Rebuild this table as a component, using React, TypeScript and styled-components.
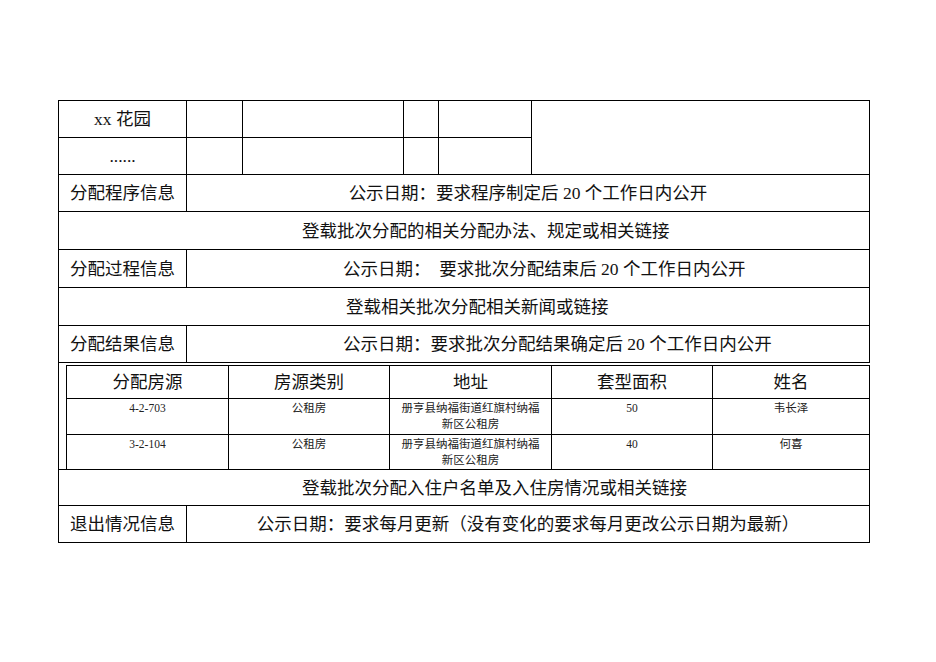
import styled, { createGlobalStyle } from 'styled-components';

const GlobalStyle = createGlobalStyle`
  html, body {
    margin: 0;
    padding: 0;
    background: #fff;
  }
  body {
    font-family: "Liberation Serif", "Noto Sans CJK SC", serif;
    color: #111;
  }
`;

type House = {
  room: string;
  kind: string;
  address: string;
  area: string;
  name: string;
  h: number;
};

const houses: House[] = [
  { room: '4-2-703', kind: '公租房', address: '册亨县纳福街道红旗村纳福新区公租房', area: '50', name: '韦长泽', h: 36 },
  { room: '3-2-104', kind: '公租房', address: '册亨县纳福街道红旗村纳福新区公租房', area: '40', name: '何喜', h: 35 },
];

const heads = ['分配房源', '房源类别', '地址', '套型面积', '姓名'];

const App = () => {
  return (
    <Page>
      <GlobalStyle />
      <Sheet>
        <colgroup>
          <col style={{ width: 128 }} />
          <col style={{ width: 56 }} />
          <col style={{ width: 161 }} />
          <col style={{ width: 35 }} />
          <col style={{ width: 93 }} />
          <col style={{ width: 338 }} />
        </colgroup>
        <tbody>
          <Row $h={37}>
            <Cell>xx 花园</Cell>
            <Cell />
            <Cell />
            <Cell />
            <Cell />
            <Cell rowSpan={2} />
          </Row>
          <Row $h={37}>
            <Cell>......</Cell>
            <Cell />
            <Cell />
            <Cell />
            <Cell />
          </Row>
          <Row $h={37}>
            <Cell>分配程序信息</Cell>
            <Cell colSpan={5}>公示日期：要求程序制定后 20 个工作日内公开</Cell>
          </Row>
          <Row $h={38}>
            <Cell colSpan={6} $indent={243}>登载批次分配的相关分配办法、规定或相关链接</Cell>
          </Row>
          <Row $h={38}>
            <Cell>分配过程信息</Cell>
            <Cell colSpan={5} $indent={156}>公示日期：　要求批次分配结束后 20 个工作日内公开</Cell>
          </Row>
          <Row $h={38}>
            <Cell colSpan={6} $indent={287}>登载相关批次分配相关新闻或链接</Cell>
          </Row>
          <Row $h={37}>
            <Cell>分配结果信息</Cell>
            <Cell colSpan={5} $indent={156}>公示日期：要求批次分配结果确定后 20 个工作日内公开</Cell>
          </Row>
          <Row>
            <NestCell colSpan={6}>
              <InnerTable>
                <colgroup>
                  <col style={{ width: 162 }} />
                  <col style={{ width: 161 }} />
                  <col style={{ width: 162 }} />
                  <col style={{ width: 161 }} />
                  <col style={{ width: 157 }} />
                </colgroup>
                <tbody>
                  <InnerRow $h={33}>
                    {heads.map((h) => (
                      <HeadCell key={h}>{h}</HeadCell>
                    ))}
                  </InnerRow>
                  {houses.map((row) => (
                    <InnerRow key={row.room} $h={row.h}>
                      <DataCell>{row.room}</DataCell>
                      <DataCell>{row.kind}</DataCell>
                      <DataCell>{row.address}</DataCell>
                      <DataCell>{row.area}</DataCell>
                      <DataCell>{row.name}</DataCell>
                    </InnerRow>
                  ))}
                </tbody>
              </InnerTable>
            </NestCell>
          </Row>
          <Row $h={36}>
            <Cell colSpan={6} $indent={243}>登载批次分配入住户名单及入住房情况或相关链接</Cell>
          </Row>
          <Row $h={37}>
            <Cell>退出情况信息</Cell>
            <Cell colSpan={5}>公示日期：要求每月更新（没有变化的要求每月更改公示日期为最新）</Cell>
          </Row>
        </tbody>
      </Sheet>
    </Page>
  );
};

export default App;

const Page = styled.main`
  padding: 100px 0 40px 58px;
`;

const Sheet = styled.table`
  width: 811px;
  border-collapse: collapse;
  table-layout: fixed;
`;

const Row = styled.tr<{ $h?: number }>`
  height: ${(p) => (p.$h ? `${p.$h}px` : 'auto')};
`;

const Cell = styled.td<{ $indent?: number }>`
  border: 1px solid #000;
  padding: 0 0 0 ${(p) => (p.$indent ? `${p.$indent}px` : '0')};
  text-align: ${(p) => (p.$indent ? 'left' : 'center')};
  vertical-align: middle;
  font-size: 17.5px;
  line-height: 22px;
  white-space: nowrap;
`;

const NestCell = styled.td`
  border: 1px solid #000;
  border-right: none;
  padding: 2px 0 0 7px;
`;

const InnerTable = styled.table`
  width: 803px;
  border-collapse: collapse;
  table-layout: fixed;
  margin-bottom: -1px;
`;

const InnerRow = styled.tr<{ $h: number }>`
  height: ${(p) => p.$h}px;
`;

const HeadCell = styled.td`
  border: 1px solid #000;
  padding: 0;
  text-align: center;
  vertical-align: middle;
  font-size: 17.5px;
  line-height: 22px;
`;

const DataCell = styled.td`
  border: 1px solid #000;
  padding: 1px 8px 0;
  text-align: center;
  vertical-align: top;
  font-size: 11.5px;
  line-height: 16px;
  color: #222;
`;
